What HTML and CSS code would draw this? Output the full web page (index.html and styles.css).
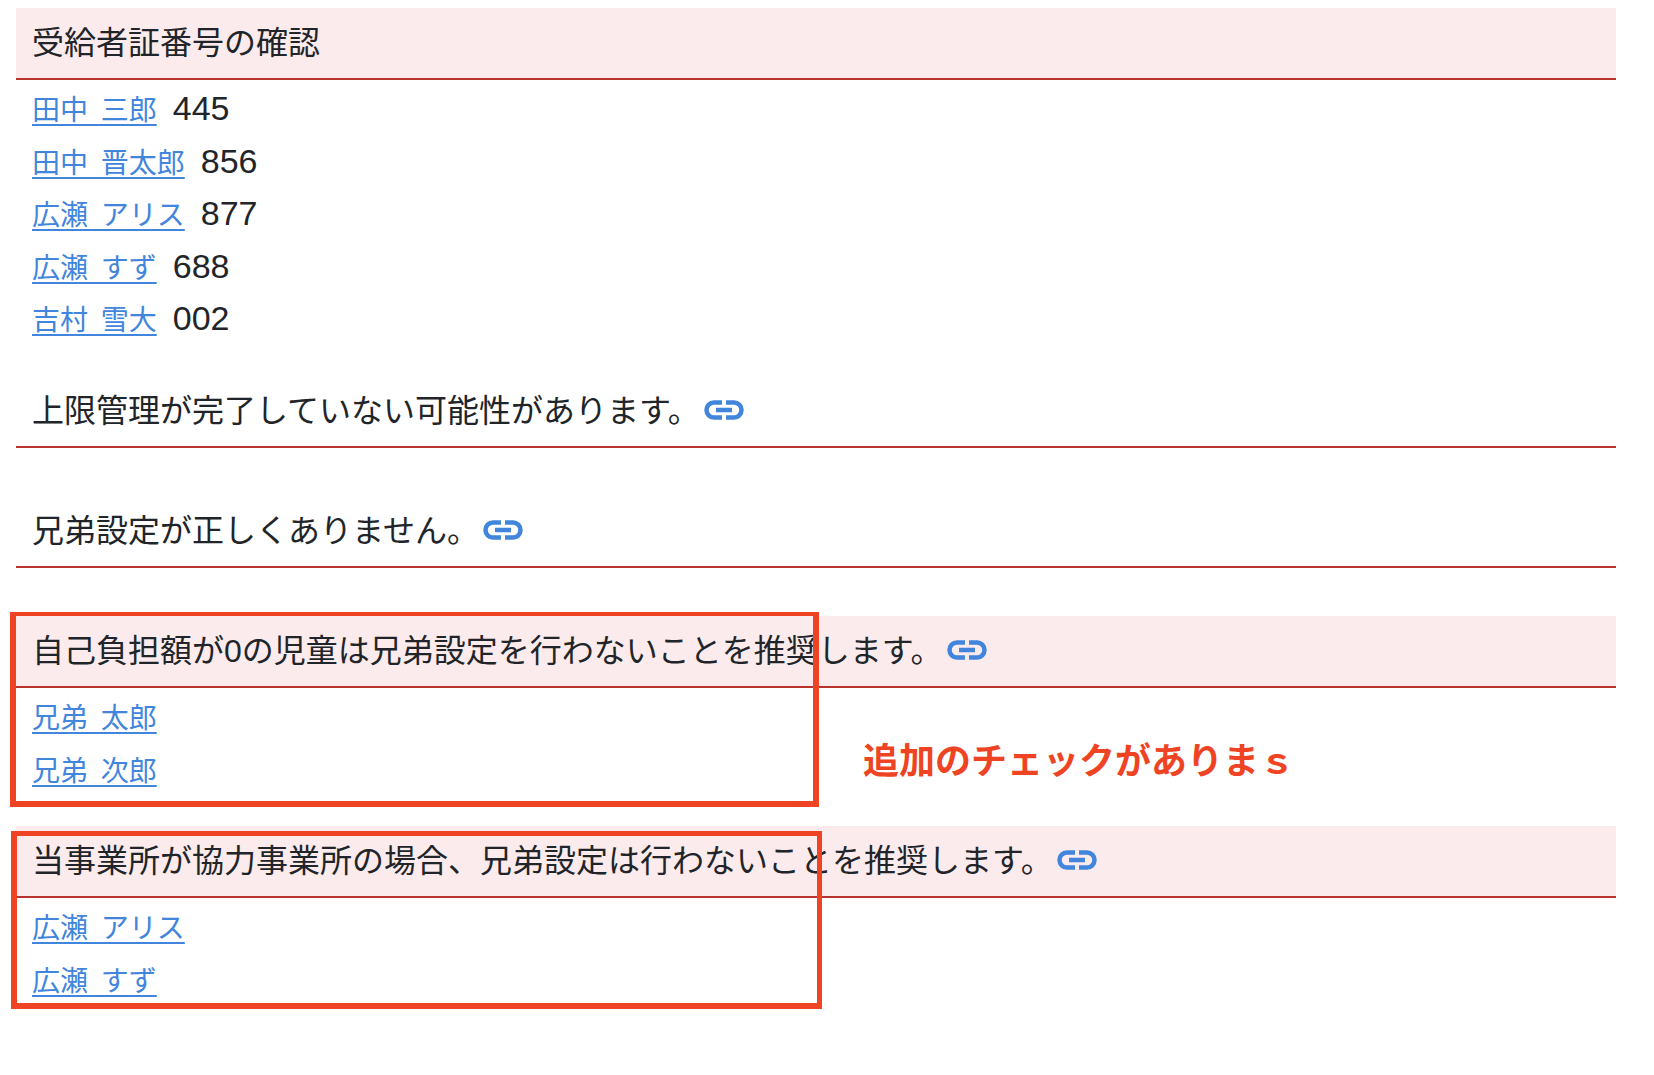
FILE: index.html
```html
<!DOCTYPE html>
<html>
<head>
  <title>受給者証番号の確認</title>
  <link rel="stylesheet" href="styles.css">
</head>
<body>
  <div class="section">
    <div class="alert-head filled">受給者証番号の確認</div>
    <div class="rows">
      <div class="row"><a href="#">田中 三郎</a><span class="num">445</span></div>
      <div class="row"><a href="#">田中 晋太郎</a><span class="num">856</span></div>
      <div class="row"><a href="#">広瀬 アリス</a><span class="num">877</span></div>
      <div class="row"><a href="#">広瀬 すず</a><span class="num">688</span></div>
      <div class="row"><a href="#">吉村 雪大</a><span class="num">002</span></div>
    </div>
  </div>

  <div class="section empty">
    <div class="alert-head">上限管理が完了していない可能性があります。<svg class="link-icon" viewBox="0 0 40 20"><path d="M18 2.5H10a7.5 7.5 0 0 0 0 15H18M22 2.5H30a7.5 7.5 0 0 1 0 15H22M12 10H28"/></svg></div>
  </div>

  <div class="section empty">
    <div class="alert-head">兄弟設定が正しくありません。<svg class="link-icon" viewBox="0 0 40 20"><path d="M18 2.5H10a7.5 7.5 0 0 0 0 15H18M22 2.5H30a7.5 7.5 0 0 1 0 15H22M12 10H28"/></svg></div>
  </div>

  <div class="section">
    <div class="alert-head filled">自己負担額が0の児童は兄弟設定を行わないことを推奨します。<svg class="link-icon" viewBox="0 0 40 20"><path d="M18 2.5H10a7.5 7.5 0 0 0 0 15H18M22 2.5H30a7.5 7.5 0 0 1 0 15H22M12 10H28"/></svg></div>
    <div class="rows">
      <div class="row"><a href="#">兄弟 太郎</a></div>
      <div class="row"><a href="#">兄弟 次郎</a></div>
    </div>
  </div>

  <div class="section">
    <div class="alert-head filled">当事業所が協力事業所の場合、兄弟設定は行わないことを推奨します。<svg class="link-icon" viewBox="0 0 40 20"><path d="M18 2.5H10a7.5 7.5 0 0 0 0 15H18M22 2.5H30a7.5 7.5 0 0 1 0 15H22M12 10H28"/></svg></div>
    <div class="rows">
      <div class="row"><a href="#">広瀬 アリス</a></div>
      <div class="row"><a href="#">広瀬 すず</a></div>
    </div>
  </div>

  <!-- annotations drawn over the page -->
  <div class="mark mark-one"></div>
  <div class="mark mark-two"></div>
  <div class="note">追加のチェックがありまｓ</div>
</body>
</html>
```

FILE: styles.css
```css
body {
  position: relative;
  margin: 0;
  padding: 8px 38px 0 16px;
  height: 1067px;
  overflow: hidden;
  background-color: #ffffff;
  color: #212529;
  font-family: "Liberation Sans", "Noto Sans CJK JP", sans-serif;
}

.section {
  margin-bottom: 28px;
}

.section.empty {
  margin-bottom: 48px;
}

.alert-head {
  box-sizing: border-box;
  height: 72px;
  padding: 0 16px;
  border-bottom: 2px solid #b8352e;
  font-size: 32px;
  line-height: 70px;
  white-space: nowrap;
}

.alert-head.filled {
  background-color: #fcebec;
}

.link-icon {
  width: 40px;
  height: 20px;
  margin-left: 4px;
  margin-bottom: 8px;
  vertical-align: middle;
  fill: none;
  stroke: #4285dc;
  stroke-width: 4.5;
}

.rows {
  padding-top: 5px;
}

.row {
  display: flex;
  align-items: baseline;
  gap: 16px;
  height: 52.6px;
  margin-left: 16px;
  line-height: 52.6px;
}

.row a {
  color: #4285dc;
  font-size: 28px;
  word-spacing: 5px;
  text-decoration-thickness: 2px;
  text-underline-offset: 4px;
}

.num {
  font-size: 34px;
  line-height: 1;
}

.mark {
  position: absolute;
  box-sizing: border-box;
  border: solid #ef4423;
}

.mark-one {
  left: 10px;
  top: 612px;
  width: 809px;
  height: 195px;
  border-width: 4px 6px 6px 6px;
}

.mark-two {
  left: 11px;
  top: 831px;
  width: 811px;
  height: 178px;
  border-width: 5px 5px 6px 6px;
}

.note {
  position: absolute;
  left: 863px;
  top: 731px;
  color: #ef4423;
  font-size: 36px;
  font-weight: bold;
  line-height: 54px;
  font-family: "Noto Sans CJK JP", sans-serif;
}
```
